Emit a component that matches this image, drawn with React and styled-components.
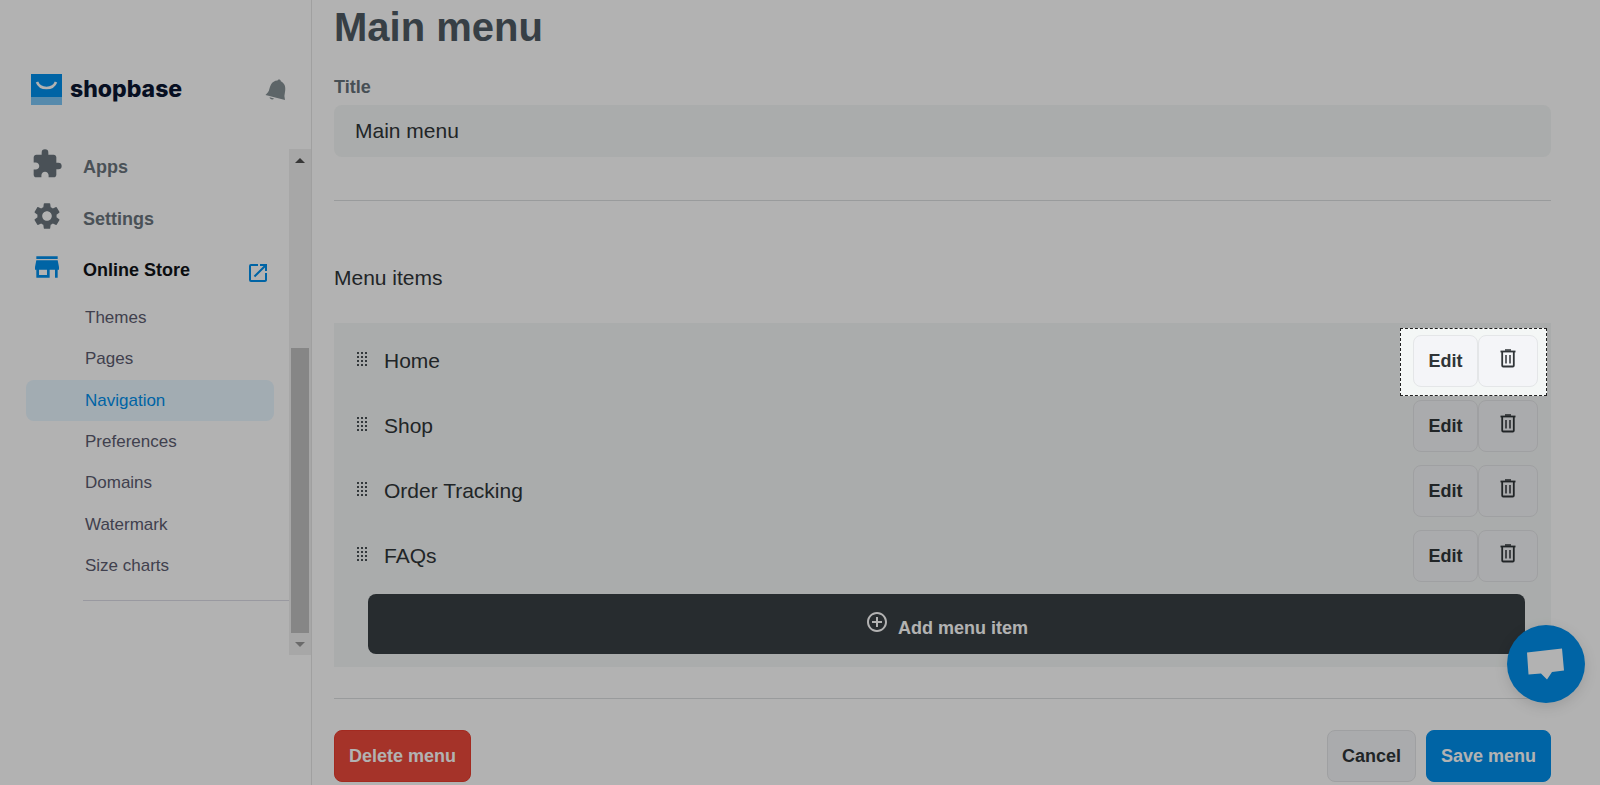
import React, { useState } from "react";
import styled, { createGlobalStyle } from "styled-components";
import {
  MdExtension,
  MdSettings,
  MdStore,
  MdOpenInNew,
  MdAddCircleOutline,
} from "react-icons/md";

const GlobalStyle = createGlobalStyle`
  * {
    box-sizing: border-box;
  }

  body {
    margin: 0;
    background-color: #ffffff;
    font-family: "Liberation Sans", Arial, sans-serif;
    overflow: hidden;
  }

  button, input {
    font-family: inherit;
  }
`;

const Page = styled.div`
  display: flex;
  min-height: 100vh;
`;

const Sidebar = styled.aside`
  width: 312px;
  flex-shrink: 0;
  border-right: 1px solid #e6e6e6;
`;

const SidebarHeader = styled.header`
  display: flex;
  align-items: center;
  justify-content: space-between;
  height: 142px;
  padding: 37px 25px 0 31px;
`;

const Brand = styled.a`
  display: flex;
  align-items: center;
  gap: 8px;
  color: #0b1632;
  font-family: Inter, sans-serif;
  font-size: 23px;
  font-weight: 800;
  line-height: 30px;
  text-decoration: none;
`;

const BrandName = styled.span`
  padding-bottom: 2px;
`;

const BellButton = styled.button`
  display: flex;
  padding: 0;
  border: none;
  background: none;
  color: #869195;
  cursor: pointer;
`;

const SidebarBody = styled.div`
  display: flex;
`;

const Nav = styled.nav`
  flex: 1;
`;

const NavList = styled.ul`
  display: grid;
  grid-template-rows: repeat(3, 1fr);
  height: 155px;
  margin: 0;
  padding: 0 19px 0 31px;
  list-style: none;
`;

const NavRow = styled.li`
  display: flex;
  align-items: flex-start;
  justify-content: space-between;
  padding-top: 6px;
`;

const NavLink = styled.a`
  display: flex;
  gap: 20px;
  color: ${(props) => (props.$active ? "#101418" : "#6a757d")};
  font-size: 18px;
  font-weight: 700;
  line-height: 39px;
  text-decoration: none;

  svg {
    color: ${(props) => (props.$active ? "#0090ed" : "#6a757d")};
  }
`;

const OpenLink = styled.a`
  display: flex;
  padding-top: 10px;
  color: #0090ed;
`;

const SubList = styled.ul`
  display: grid;
  grid-template-rows: repeat(7, 1fr);
  height: 290px;
  margin: 0;
  padding: 0 15px 0 26px;
  list-style: none;
`;

const SubLink = styled.a`
  display: flex;
  align-items: center;
  height: 100%;
  padding-left: 59px;
  border-radius: 8px;
  background-color: ${(props) => (props.$active ? "#e8f6ff" : "transparent")};
  color: ${(props) => (props.$active ? "#0090ed" : "#5c5c70")};
  font-size: 17px;
  text-decoration: none;
`;

const NavDivider = styled.hr`
  margin: 13px 0 0 83px;
  border: none;
  border-top: 1px solid #dcdce6;
`;

const ScrollTrack = styled.div`
  display: flex;
  flex-direction: column;
  align-items: center;
  width: 22px;
  height: 506px;
  margin-top: 7px;
  background-color: #f0f0f0;
`;

const ScrollArrow = styled.div`
  display: flex;
  align-items: center;
  justify-content: center;
  height: 22px;
  color: ${(props) => (props.$enabled ? "#505050" : "#989898")};
`;

const ScrollThumb = styled.div`
  width: 18px;
  height: 285px;
  margin-top: auto;
  background-color: #c0c0c0;
`;

const Main = styled.main`
  flex: 1;
  min-width: 0;
  padding: 4px 49px 0 22px;
`;

const Heading = styled.h1`
  margin: 0;
  color: #4f5b64;
  font-size: 40px;
  font-weight: 700;
  line-height: 46px;
`;

const FieldLabel = styled.label`
  display: block;
  margin-top: 26px;
  color: #66727a;
  font-size: 18px;
  font-weight: 700;
  line-height: 22px;
`;

const TitleInput = styled.input`
  display: block;
  width: 100%;
  height: 52px;
  margin-top: 7px;
  padding: 0 21px;
  border: none;
  border-radius: 8px;
  background-color: #f4f7f6;
  color: #303538;
  font-size: 21px;
`;

const Divider = styled.hr`
  margin: 0;
  border: none;
  border-top: 1px solid #dcdfe0;
`;

const ItemsTitle = styled.h2`
  margin: 64px 0 32px;
  color: #303538;
  font-size: 21px;
  font-weight: 400;
  line-height: 26px;
`;

const FieldGroup = styled.section`
  padding-bottom: 43px;
`;

const ItemsCard = styled.section`
  margin-bottom: 31px;
  padding: 12px 0 13px;
  background-color: #f4f7f6;
`;

const ItemList = styled.ul`
  display: flex;
  flex-direction: column;
  gap: 13px;
  margin: 0 0 12px;
  padding: 0 13px 0 23px;
  list-style: none;
`;

const ItemRow = styled.li`
  display: flex;
  align-items: center;
  height: 52px;
`;

const DragHandle = styled.svg`
  margin: 0 16px 4px 0;
  fill: #4a5155;
`;

const ItemName = styled.span`
  flex: 1;
  color: #303538;
  font-size: 21px;
`;

const ItemActions = styled.div`
  position: relative;
  display: flex;
`;

/* the huge outline dims everything outside of the highlighted area */
const Spotlight = styled.div`
  position: absolute;
  inset: -7px -9px -9px -13px;
  z-index: 10;
  border: 1px dashed #202020;
  outline: 9999px solid rgba(0, 0, 0, 0.3);
  pointer-events: none;
`;

const Button = styled.button`
  height: 52px;
  padding: 0 14px;
  border: 1px solid ${(props) => props.$border || "#e4e6e8"};
  border-radius: 8px;
  background-color: ${(props) => props.$bg || "#f4f5f8"};
  color: ${(props) => props.$color || "#303538"};
  font-size: 18px;
  font-weight: 700;
  cursor: pointer;
`;

const EditButton = styled(Button)`
  width: 65px;
`;

const TrashButton = styled(Button)`
  display: flex;
  justify-content: center;
  width: 60px;
  padding: 13px 0 0;
`;

const AddButton = styled.button`
  display: flex;
  align-items: flex-start;
  justify-content: center;
  gap: 9px;
  width: calc(100% - 60px);
  height: 60px;
  margin: 0 26px 0 34px;
  padding: 16px 0 0;
  border: none;
  border-radius: 8px;
  background-color: #383f44;
  color: #ffffff;
  font-size: 18px;
  font-weight: 700;
  line-height: 36px;
  cursor: pointer;
`;

const Footer = styled.footer`
  display: flex;
  gap: 10px;
  padding-top: 31px;
`;

const DeleteButton = styled(Button)`
  margin-right: auto;
`;

const ChatButton = styled.button`
  position: fixed;
  right: 15px;
  bottom: 82px;
  display: flex;
  align-items: center;
  justify-content: center;
  width: 78px;
  height: 78px;
  padding: 0;
  border: none;
  border-radius: 50%;
  background-color: #0090ed;
  box-shadow: 0 4px 14px rgba(0, 0, 0, 0.12);
  cursor: pointer;
`;

const navItems = [
  { label: "Apps", icon: MdExtension },
  { label: "Settings", icon: MdSettings },
  { label: "Online Store", icon: MdStore, active: true },
];

const subItems = [
  "Themes",
  "Pages",
  "Navigation",
  "Preferences",
  "Domains",
  "Watermark",
  "Size charts",
];

const menuItems = ["Home", "Shop", "Order Tracking", "FAQs"];

const LogoMark = () => (
  <svg width="31" height="31" viewBox="0 0 31 31" aria-hidden="true">
    <rect width="31" height="23" fill="#0090ed" />
    <rect y="23" width="31" height="8" fill="#7cc6f6" />
    <path
      d="M6 8c1.500 4 5 6 9.500 6s8-2 9.500-6"
      fill="none"
      stroke="#ffffff"
      strokeWidth="2.600"
    />
  </svg>
);

const BellIcon = () => (
  <svg width="21" height="23" viewBox="0 0 21 23" fill="currentColor" aria-hidden="true">
    <path d="M12.500 2.500C12.800 1 15.800.8 15.800 3.200 19.500 5 20.800 8.500 20.200 12.500L19.400 18 20 22 .5 17 3 14.200C4.500 12.500 4.300 9.500 6 6.500 7.500 4 9.500 2.700 12.500 2.500z" />
    <path d="M4.500 19.300l4.500 1.100c-1 1.800-4 1.200-4.500-1.100z" />
  </svg>
);

const TrashIcon = () => (
  <svg width="16" height="19" viewBox="0 0 16 19" aria-hidden="true">
    <g fill="none" stroke="#303538">
      <path d="M0.500 2.500h15" strokeWidth="1.800" />
      <path d="M5 1h6" strokeWidth="1.500" />
      <path d="M2.200 3v13.500q0 1 1 1h9.600q1 0 1-1V3" strokeWidth="1.800" />
      <path d="M6 6v8.500M10 6v8.500" strokeWidth="1.500" />
    </g>
  </svg>
);

const HandleIcon = () => (
  <DragHandle width="11" height="14" viewBox="0 0 11 14" aria-hidden="true">
    {[0, 4, 8, 12].map((y) =>
      [0, 4, 8].map((x) => (
        <rect key={`${x}-${y}`} x={x} y={y} width="2" height="2" />
      ))
    )}
  </DragHandle>
);

const ChatIcon = () => (
  <svg width="38" height="32" viewBox="0 0 38 32" aria-hidden="true">
    <path
      d="M0 4.500 35 0.500 37 22.500 25 24 20 31.500 14 25.500 1.500 26.500z"
      fill="#ffffff"
    />
  </svg>
);

const AppSidebar = () => (
  <Sidebar>
    <SidebarHeader>
      <Brand href="#">
        <LogoMark />
        <BrandName>shopbase</BrandName>
      </Brand>
      <BellButton aria-label="Notifications">
        <BellIcon />
      </BellButton>
    </SidebarHeader>
    <SidebarBody>
      <Nav>
        <NavList>
          {navItems.map(({ label, icon: Icon, active }) => (
            <NavRow key={label}>
              <NavLink href="#" $active={active}>
                <Icon size={32} />
                {label}
              </NavLink>
              {active && (
                <OpenLink href="#" aria-label="View online store">
                  <MdOpenInNew size={24} />
                </OpenLink>
              )}
            </NavRow>
          ))}
        </NavList>
        <SubList>
          {subItems.map((label) => (
            <li key={label}>
              <SubLink href="#" $active={label === "Navigation"}>
                {label}
              </SubLink>
            </li>
          ))}
        </SubList>
        <NavDivider />
      </Nav>
      <ScrollTrack>
        <ScrollArrow $enabled>
          <svg width="10" height="5" viewBox="0 0 10 5">
            <path d="M0 5 5 0l5 5z" fill="currentColor" />
          </svg>
        </ScrollArrow>
        <ScrollThumb />
        <ScrollArrow>
          <svg width="10" height="5" viewBox="0 0 10 5">
            <path d="M0 0h10L5 5z" fill="currentColor" />
          </svg>
        </ScrollArrow>
      </ScrollTrack>
    </SidebarBody>
  </Sidebar>
);

const App = () => {
  const [title, setTitle] = useState("Main menu");

  return (
    <>
      <GlobalStyle />
      <Page>
        <AppSidebar />
        <Main>
          <Heading>Main menu</Heading>
          <FieldGroup>
            <FieldLabel htmlFor="menu-title">Title</FieldLabel>
            <TitleInput
              id="menu-title"
              type="text"
              value={title}
              onChange={(e) => setTitle(e.target.value)}
            />
          </FieldGroup>
          <Divider />
          <ItemsTitle>Menu items</ItemsTitle>
          <ItemsCard>
            <ItemList>
              {menuItems.map((name, index) => (
                <ItemRow key={name}>
                  <HandleIcon />
                  <ItemName>{name}</ItemName>
                  <ItemActions>
                    <EditButton>Edit</EditButton>
                    <TrashButton aria-label={`Delete ${name}`}>
                      <TrashIcon />
                    </TrashButton>
                    {index === 0 && <Spotlight />}
                  </ItemActions>
                </ItemRow>
              ))}
            </ItemList>
            <AddButton>
              <MdAddCircleOutline size={24} />
              Add menu item
            </AddButton>
          </ItemsCard>
          <Divider />
          <Footer>
            <DeleteButton $bg="#ed493b" $border="#ea3d2e" $color="#ffffff">
              Delete menu
            </DeleteButton>
            <Button>Cancel</Button>
            <Button $bg="#0090ed" $border="#0090ed" $color="#ffffff">
              Save menu
            </Button>
          </Footer>
        </Main>
      </Page>
      <ChatButton aria-label="Open chat">
        <ChatIcon />
      </ChatButton>
    </>
  );
};

export default App;
